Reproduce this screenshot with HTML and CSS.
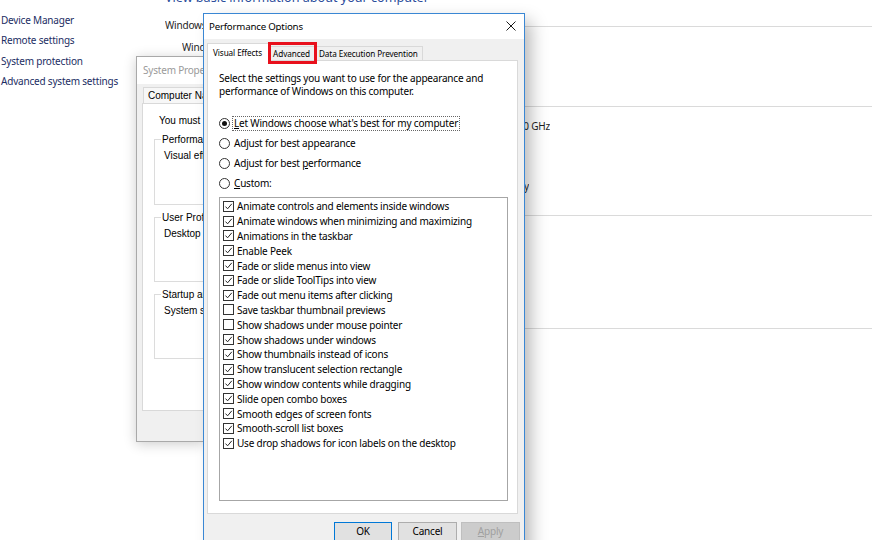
FILE: index.html
```html
<!DOCTYPE html>
<html lang="en">
<head>
<meta charset="utf-8">
<title>Performance Options</title>
<link rel="stylesheet" href="styles.css">
</head>
<body>
<div class="desktop">
  <aside class="side">
    <a class="side-link">Device Manager</a>
    <a class="side-link">Remote settings</a>
    <a class="side-link">System protection</a>
    <a class="side-link">Advanced system settings</a>
  </aside>

  <main class="main">
    <h1 class="heading">View basic information about your computer</h1>
    <div class="sec-head first"><span class="clip clip-ed">Windows edition</span><i class="rule"></i></div>
    <div class="row r-ed"><span class="clip clip-pro">Windows 10 Pro</span></div>
    <div class="sec-head s-sys"><i class="rule"></i></div>
    <div class="row r-cpu"><span class="tail tail-cpu"><span>2.70 GHz</span></span></div>
    <div class="row r-pen"><span class="tail tail-pen"><span>No Pen or Touch Input is available for this Display</span></span></div>
    <div class="sec-head s-name"><i class="rule"></i></div>
    <div class="sec-head s-act"><i class="rule"></i></div>
  </main>

  <div class="win sysprops">
    <div class="sp-title">System Properties</div>
    <div class="sp-body">
      <div class="sp-tabs">
        <span class="sp-tab">Computer Name</span>
      </div>
      <div class="sp-panel">
        <p class="sp-note">You must be logged on as an Administrator to make most of these changes.</p>
        <div class="group g1">
          <span class="legend">Performance</span>
          <p class="group-text">Visual effects, processor scheduling, memory usage, and virtual memory</p>
        </div>
        <div class="group">
          <span class="legend">User Profiles</span>
          <p class="group-text">Desktop settings related to your sign-in</p>
        </div>
        <div class="group">
          <span class="legend">Startup and Recovery</span>
          <p class="group-text">System startup, system failure, and debugging information</p>
        </div>
      </div>
    </div>
  </div>

  <div class="win perf">
    <div class="pf-title">
      <span>Performance Options</span>
      <svg class="close" width="10" height="10" viewBox="0 0 10 10"><path d="M0.5 0.5 L9.5 9.5 M9.5 0.5 L0.5 9.5" stroke="#1a1a1a" stroke-width="1" fill="none"/></svg>
    </div>
    <div class="pf-body">
      <div class="tabs">
        <span class="tab sel">Visual Effects</span>
        <span class="tab">Advanced</span>
        <span class="tab">Data Execution Prevention</span>
      </div>
      <div class="panel">
        <p class="intro">Select the settings you want to use for the appearance and performance of Windows on this computer.</p>
        <div class="radios">
          <div class="radio-row"><span class="radio on"></span><span class="rlabel focus"><u>L</u>et Windows choose what's best for my computer</span></div>
          <div class="radio-row"><span class="radio"></span><span class="rlabel">Adjust for best appearance</span></div>
          <div class="radio-row"><span class="radio"></span><span class="rlabel">Adjust for best <u>p</u>erformance</span></div>
          <div class="radio-row"><span class="radio"></span><span class="rlabel"><u>C</u>ustom:</span></div>
        </div>
        <div class="listbox">
          <div class="item"><span class="cb"><svg viewBox="0 0 9 9" width="9" height="9"><path d="M1.5 4.6 L3.6 6.8 L7.8 1.8" stroke="#222" stroke-width="1" fill="none"/></svg></span>Animate controls and elements inside windows</div>
          <div class="item"><span class="cb"><svg viewBox="0 0 9 9" width="9" height="9"><path d="M1.5 4.6 L3.6 6.8 L7.8 1.8" stroke="#222" stroke-width="1" fill="none"/></svg></span>Animate windows when minimizing and maximizing</div>
          <div class="item"><span class="cb"><svg viewBox="0 0 9 9" width="9" height="9"><path d="M1.5 4.6 L3.6 6.8 L7.8 1.8" stroke="#222" stroke-width="1" fill="none"/></svg></span>Animations in the taskbar</div>
          <div class="item"><span class="cb"><svg viewBox="0 0 9 9" width="9" height="9"><path d="M1.5 4.6 L3.6 6.8 L7.8 1.8" stroke="#222" stroke-width="1" fill="none"/></svg></span>Enable Peek</div>
          <div class="item"><span class="cb"><svg viewBox="0 0 9 9" width="9" height="9"><path d="M1.5 4.6 L3.6 6.8 L7.8 1.8" stroke="#222" stroke-width="1" fill="none"/></svg></span>Fade or slide menus into view</div>
          <div class="item"><span class="cb"><svg viewBox="0 0 9 9" width="9" height="9"><path d="M1.5 4.6 L3.6 6.8 L7.8 1.8" stroke="#222" stroke-width="1" fill="none"/></svg></span>Fade or slide ToolTips into view</div>
          <div class="item"><span class="cb"><svg viewBox="0 0 9 9" width="9" height="9"><path d="M1.5 4.6 L3.6 6.8 L7.8 1.8" stroke="#222" stroke-width="1" fill="none"/></svg></span>Fade out menu items after clicking</div>
          <div class="item"><span class="cb"></span>Save taskbar thumbnail previews</div>
          <div class="item"><span class="cb"></span>Show shadows under mouse pointer</div>
          <div class="item"><span class="cb"><svg viewBox="0 0 9 9" width="9" height="9"><path d="M1.5 4.6 L3.6 6.8 L7.8 1.8" stroke="#222" stroke-width="1" fill="none"/></svg></span>Show shadows under windows</div>
          <div class="item"><span class="cb"><svg viewBox="0 0 9 9" width="9" height="9"><path d="M1.5 4.6 L3.6 6.8 L7.8 1.8" stroke="#222" stroke-width="1" fill="none"/></svg></span>Show thumbnails instead of icons</div>
          <div class="item"><span class="cb"><svg viewBox="0 0 9 9" width="9" height="9"><path d="M1.5 4.6 L3.6 6.8 L7.8 1.8" stroke="#222" stroke-width="1" fill="none"/></svg></span>Show translucent selection rectangle</div>
          <div class="item"><span class="cb"><svg viewBox="0 0 9 9" width="9" height="9"><path d="M1.5 4.6 L3.6 6.8 L7.8 1.8" stroke="#222" stroke-width="1" fill="none"/></svg></span>Show window contents while dragging</div>
          <div class="item"><span class="cb"><svg viewBox="0 0 9 9" width="9" height="9"><path d="M1.5 4.6 L3.6 6.8 L7.8 1.8" stroke="#222" stroke-width="1" fill="none"/></svg></span>Slide open combo boxes</div>
          <div class="item"><span class="cb"><svg viewBox="0 0 9 9" width="9" height="9"><path d="M1.5 4.6 L3.6 6.8 L7.8 1.8" stroke="#222" stroke-width="1" fill="none"/></svg></span>Smooth edges of screen fonts</div>
          <div class="item"><span class="cb"><svg viewBox="0 0 9 9" width="9" height="9"><path d="M1.5 4.6 L3.6 6.8 L7.8 1.8" stroke="#222" stroke-width="1" fill="none"/></svg></span>Smooth-scroll list boxes</div>
          <div class="item"><span class="cb"><svg viewBox="0 0 9 9" width="9" height="9"><path d="M1.5 4.6 L3.6 6.8 L7.8 1.8" stroke="#222" stroke-width="1" fill="none"/></svg></span>Use drop shadows for icon labels on the desktop</div>
        </div>
      </div>
      <div class="buttons">
        <span class="btn b-ok">OK</span>
        <span class="btn b-cancel">Cancel</span>
        <span class="btn b-apply"><u>A</u>pply</span>
      </div>
    </div>
    <div class="highlight"></div>
  </div>
</div>
</body>
</html>
```

FILE: styles.css
```css
* { box-sizing: border-box; }

body {
  margin: 0;
  font-family: "Noto Sans", "DejaVu Sans", sans-serif;
  font-size: 10px;
  letter-spacing: -0.2px;
  color: #000;
}

p { margin: 0; }

.desktop {
  position: relative;
  width: 872px;
  height: 540px;
  overflow: hidden;
  background: #fff;
  display: flex;
}

/* ---------- background control panel page ---------- */
.side {
  width: 165px;
  flex: none;
  padding-top: 10px;
  display: flex;
  flex-direction: column;
}

.side-link {
  line-height: 20.3px;
  padding-left: 1px;
  color: #1b2d63;
  white-space: nowrap;
}

.main {
  flex: 1;
  min-width: 0;
  margin-top: -11px;
  display: flex;
  flex-direction: column;
}

.heading {
  margin: 0;
  height: 17px;
  font-size: 12.6px;
  font-weight: normal;
  line-height: 17px;
  letter-spacing: 0;
  color: #2b4c9b;
  white-space: nowrap;
}

.sec-head {
  display: flex;
  align-items: center;
  height: 14px;
  line-height: 14px;
  color: #1e1e1e;
  white-space: nowrap;
}

.sec-head .rule {
  flex: 1;
  height: 1px;
  margin-top: 2px;
  background: #dadada;
}

.clip {
  display: block;
  overflow: hidden;
  white-space: nowrap;
  flex: none;
}

.clip-ed { width: 38px; margin-right: 6px; }
.clip-pro { width: 21px; }

.sec-head.first { margin-top: 12px; }
.s-sys { margin-top: 44px; }
.s-name { margin-top: 14px; }
.s-act { margin-top: 99px; }

.row {
  display: flex;
  height: 14px;
  line-height: 14px;
  white-space: nowrap;
  color: #1e1e1e;
}

.r-ed { margin-top: 8px; padding-left: 17px; }
.r-cpu { margin-top: 7px; }
.r-pen { margin-top: 46px; }

.tail {
  display: flex;
  justify-content: flex-end;
  overflow: hidden;
  margin-left: 345px;
  flex: none;
}

.tail > span { flex: none; }

.tail-cpu { width: 40px; }
.tail-pen { width: 19px; }

/* ---------- windows ---------- */
.win { position: absolute; }

.sysprops {
  left: 136px;
  top: 56px;
  width: 68px;
  height: 386px;
  border: 1px solid #a9a9a9;
  border-right: none;
  background: #f0f0f0;
  box-shadow: 0 2px 12px rgba(0, 0, 0, 0.2);
  overflow: hidden;
  display: flex;
  flex-direction: column;
}

.sp-title {
  height: 27px;
  line-height: 27px;
  padding-left: 6px;
  background: #fff;
  color: #9a9a9a;
  white-space: nowrap;
  overflow: hidden;
  flex: none;
}

.sp-body {
  flex: 1;
  padding: 3px 0 0 5px;
  font-family: "Liberation Sans", Arial, sans-serif;
  letter-spacing: 0;
  display: flex;
  flex-direction: column;
}

.sp-tabs {
  display: flex;
  padding-left: 1px;
  overflow: hidden;
}

.sp-tab {
  height: 16px;
  line-height: 15px;
  padding: 0 4px;
  border: 1px solid #d9d9d9;
  border-bottom: none;
  background: #f7f7f7;
  white-space: nowrap;
  flex: none;
}

.sp-panel {
  height: 308px;
  border: 1px solid #d9d9d9;
  border-right: none;
  background: #fff;
  padding: 10px 0 0 11px;
}

.sp-note {
  line-height: 13px;
  padding-left: 5px;
  white-space: nowrap;
  overflow: hidden;
}

.group {
  border: 1px solid #dcdcdc;
  border-right: none;
  height: 65px;
  margin-top: 12px;
  padding-left: 6px;
}

.group.g1 { height: 66px; }

.legend {
  display: block;
  margin-top: -7px;
  padding: 0 1px;
  line-height: 13px;
  background: #fff;
  white-space: nowrap;
  overflow: hidden;
}

.group-text {
  margin-top: 3px;
  padding-left: 3px;
  line-height: 13px;
  white-space: nowrap;
  overflow: hidden;
}

/* ---------- Performance Options ---------- */
.perf {
  left: 203px;
  top: 13px;
  width: 322px;
  height: 545px;
  border: 1px solid #3a87d4;
  background: #f0f0f0;
  box-shadow: 8px 6px 16px -2px rgba(0, 0, 0, 0.28);
  display: flex;
  flex-direction: column;
}

.pf-title {
  height: 25px;
  flex: none;
  background: #fff;
  display: flex;
  align-items: center;
  justify-content: space-between;
  padding: 0 8px 0 5px;
  font-size: 9.7px;
}

.close { display: block; margin-top: -1px; }

.pf-body {
  flex: 1;
  padding: 4px 6px 0 3px;
  display: flex;
  flex-direction: column;
}

.tabs {
  display: flex;
  align-items: flex-end;
  height: 17px;
  position: relative;
  z-index: 1;
}

.tab {
  height: 14px;
  line-height: 13px;
  padding: 0 4px;
  font-size: 8.2px;
  letter-spacing: -0.1px;
  border: 1px solid #d9d9d9;
  border-bottom: none;
  background: #f0f0f0;
  white-space: nowrap;
}

.tab.sel {
  height: 18px;
  line-height: 18px;
  margin-bottom: -1px;
  padding: 0 6px 0 5px;
  background: #fff;
}

.tab + .tab { border-left: none; }

.panel {
  height: 454px;
  border: 1px solid #d9d9d9;
  background: #fff;
  padding: 11px 9px 0 11px;
}

.intro {
  line-height: 13px;
  width: 280px;
}

.radios {
  margin-top: 15px;
  display: flex;
  flex-direction: column;
}

.radio-row {
  height: 20px;
  display: flex;
  align-items: center;
}

.radio {
  width: 11px;
  height: 11px;
  border: 1px solid #333;
  border-radius: 50%;
  background: #fff;
  display: flex;
  align-items: center;
  justify-content: center;
  flex: none;
}

.radio.on::after {
  content: "";
  width: 5px;
  height: 5px;
  border-radius: 50%;
  background: #111;
}

.rlabel {
  margin-left: 2px;
  padding: 0 1px;
  line-height: 13px;
  border: 1px solid transparent;
  white-space: nowrap;
}

.rlabel.focus { border: 1px dotted #666; }

.listbox {
  margin-top: 4px;
  width: 289px;
  height: 304px;
  border: 1px solid #a6a6a6;
  background: #fff;
  padding: 1px 0 0 3px;
}

.item {
  height: 14.8px;
  display: flex;
  align-items: center;
  white-space: nowrap;
}

.cb {
  width: 11px;
  height: 11px;
  border: 1px solid #333;
  background: #fff;
  margin-right: 3px;
  flex: none;
  display: flex;
  align-items: center;
  justify-content: center;
}

.cb svg { display: block; }

.buttons {
  margin-top: 8px;
  margin-right: -2px;
  display: flex;
  justify-content: flex-end;
}

.btn {
  height: 23px;
  line-height: 17px;
  text-align: center;
  background: #e1e1e1;
  border: 1px solid #adadad;
  flex: none;
}

.b-ok { width: 58px; border-color: #0078d7; }
.b-cancel { width: 59px; margin-left: 6px; }

.b-apply {
  width: 59px;
  margin-left: 4px;
  background: #cccccc;
  border-color: #bfbfbf;
  color: #a0a0a0;
}

.highlight {
  position: absolute;
  left: 64px;
  top: 28px;
  width: 49px;
  height: 22px;
  border: 3px solid #e8101c;
  z-index: 2;
}
```
